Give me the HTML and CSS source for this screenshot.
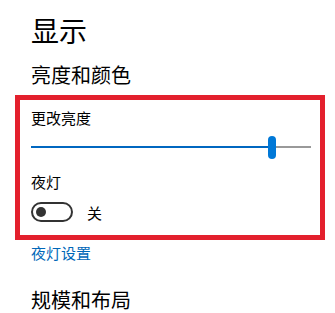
FILE: index.html
```html
<!DOCTYPE html>
<html lang="zh-CN">
<head>
    <meta charset="UTF-8">
    <meta name="viewport" content="width=device-width, initial-scale=1.0">
    <title>显示</title>
    <link rel="stylesheet" href="styles.css">
</head>
<body>

<div class="page">
    <h1 class="page-title">显示</h1>
    <h2 class="section-title">亮度和颜色</h2>

    <div class="highlight-box">
        <div class="label">更改亮度</div>
        <div class="slider">
            <div class="slider-fill"></div>
            <div class="slider-thumb"></div>
            <div class="slider-rest"></div>
        </div>

        <div class="label label-night">夜灯</div>
        <div class="toggle-row">
            <div class="toggle"><div class="toggle-knob"></div></div>
            <span class="toggle-text">关</span>
        </div>
    </div>

    <a class="link" href="#">夜灯设置</a>

    <h2 class="section-title section-layout">规模和布局</h2>
</div>

</body>
</html>
```

FILE: styles.css
```css
body {
    margin: 0;
    background-color: #fff;
    color: #000;
    font-family: "Noto Sans CJK SC", "Noto Sans", sans-serif;
    overflow: hidden;
}

.page {
    padding: 0 0 0 15px;
    width: 310px;
}

.page-title {
    font-size: 28px;
    font-weight: normal;
    line-height: 36px;
    margin: 12px 0 0 16px;
}

.section-title {
    font-size: 20px;
    font-weight: normal;
    line-height: 28px;
    margin: 13px 0 0 16px;
}

.highlight-box {
    margin-top: 6px;
    border: 5px solid #e3202d;
    padding: 8px 9px 13px 11px;
}

.label {
    font-size: 15px;
    line-height: 20px;
}

.label-night {
    margin-top: 13px;
}

.slider {
    display: flex;
    align-items: center;
    height: 24px;
    margin-top: 7px;
}

.slider-fill {
    flex: 0 0 237px;
    height: 2px;
    background-color: #0067c0;
}

.slider-thumb {
    flex: 0 0 8px;
    height: 23px;
    border-radius: 4px;
    background-color: #0078d7;
}

.slider-rest {
    flex: 1;
    height: 2px;
    background-color: #999;
}

.toggle-row {
    display: flex;
    align-items: center;
    margin-top: 10px;
    height: 20px;
}

.toggle {
    box-sizing: border-box;
    width: 42px;
    height: 20px;
    border: 2px solid #333;
    border-radius: 10px;
    display: flex;
    align-items: center;
    padding: 0 3px;
}

.toggle-knob {
    width: 10px;
    height: 10px;
    border-radius: 50%;
    background-color: #333;
}

.toggle-text {
    font-size: 15px;
    margin-left: 14px;
}

.link {
    display: block;
    font-size: 15px;
    line-height: 20px;
    margin: 3px 0 0 16px;
    color: #0067b8;
    text-decoration: none;
}

.section-layout {
    margin-top: 23px;
}
```
